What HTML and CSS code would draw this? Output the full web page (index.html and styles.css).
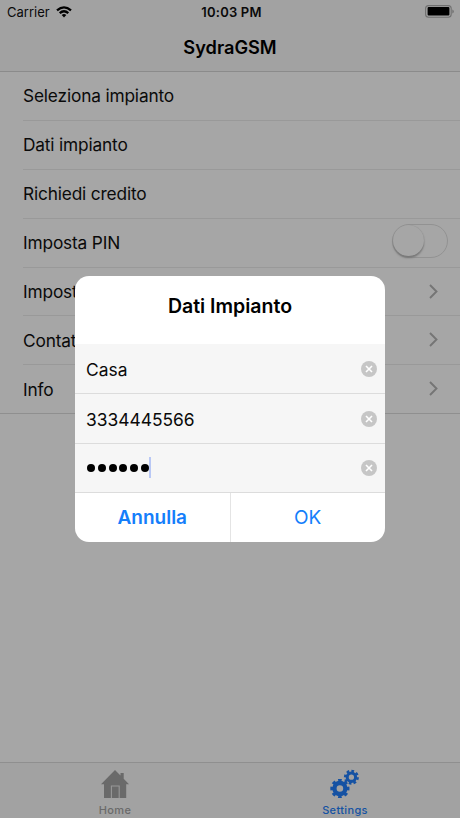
FILE: index.html
```html
<!DOCTYPE html>
<html lang="it">
<head>
<meta charset="utf-8">
<title>SydraGSM</title>
<link rel="stylesheet" href="styles.css">
</head>
<body>
<div class="screen">
  <header class="top">
    <div class="status">
      <div class="carrier"><span>Carrier</span>
        <svg width="16" height="12" viewBox="0 0 16 12" fill="none" stroke="#000" stroke-width="2.3"><path d="M1 4.4Q8-1.7 15 4.4"/><path d="M3.7 7.2Q8 3.3 12.3 7.2"/><path d="M5.7 9Q8 7 10.3 9L8 11.4Z" fill="#000" stroke="none"/></svg>
      </div>
      <div class="time">10:03 PM</div>
      <svg class="battery" width="29" height="13" viewBox="0 0 29 13"><rect x=".6" y=".6" width="25.6" height="11.6" rx="3" fill="none" stroke="#707070" stroke-width="1.1"/><rect x="2.6" y="2" width="21.8" height="8.6" rx="1" /><path d="M27.3 4.4q1.5.6 1.5 2t-1.5 2z" fill="#707070"/></svg>
    </div>
    <h1 class="title">SydraGSM</h1>
  </header>
  <main class="list">
    <div class="row"><span>Seleziona impianto</span></div>
    <div class="row"><span>Dati impianto</span></div>
    <div class="row"><span>Richiedi credito</span></div>
    <div class="row row-switch"><span>Imposta PIN</span><i class="switch"><i class="knob"></i></i></div>
    <div class="row"><span>Impostazioni</span><svg class="chevron" width="9" height="15" viewBox="0 0 9 15"><path d="M1 1l6.5 6.5L1 14"/></svg></div>
    <div class="row"><span>Contatti</span><svg class="chevron" width="9" height="15" viewBox="0 0 9 15"><path d="M1 1l6.5 6.5L1 14"/></svg></div>
    <div class="row row-last"><span>Info</span><svg class="chevron" width="9" height="15" viewBox="0 0 9 15"><path d="M1 1l6.5 6.5L1 14"/></svg></div>
  </main>
  <nav class="tabs">
    <div class="tab">
      <svg width="30" height="30" viewBox="0 0 30 30"><path fill="#6a6a6a" d="M15 1L20.5 6.5V4h3.2v5.7L29 15.2H26.2V29H4V15.2H1Z"/><path d="M11.4 29V17h7.8V29" fill="none" stroke="#989898" stroke-width="1.1"/></svg>
      <span>Home</span>
    </div>
    <div class="tab active">
      <svg width="30" height="30" viewBox="0 0 30 30" fill="none" stroke="#1552a3"><circle cx="9.9" cy="19.5" r="5.5" stroke-width="4.4"/><circle cx="9.9" cy="19.5" r="8.1" stroke-width="3" pathLength="16" stroke-dasharray="1.1 .9" stroke-dashoffset=".55"/><circle cx="21.4" cy="8.2" r="4.2" stroke-width="3.1"/><circle cx="21.4" cy="8.2" r="6.3" stroke-width="2.4" pathLength="16" stroke-dasharray="1.1 .9" stroke-dashoffset="0"/></svg>
      <span>Settings</span>
    </div>
  </nav>
  <div class="dialog">
    <h2 class="dialog-title">Dati Impianto</h2>
    <div class="field"><span>Casa</span><svg class="clear" width="16" height="16" viewBox="0 0 16 16"><circle cx="8" cy="8" r="8"/><path d="M5 5l6 6M11 5l-6 6"/></svg></div>
    <div class="field"><span class="number">3334445566</span><svg class="clear" width="16" height="16" viewBox="0 0 16 16"><circle cx="8" cy="8" r="8"/><path d="M5 5l6 6M11 5l-6 6"/></svg></div>
    <div class="field"><div class="password"><i></i><i></i><i></i><i></i><i></i><i></i><b class="caret"></b></div><svg class="clear" width="16" height="16" viewBox="0 0 16 16"><circle cx="8" cy="8" r="8"/><path d="M5 5l6 6M11 5l-6 6"/></svg></div>
    <div class="actions"><div class="cancel"><span>Annulla</span></div><div class="ok"><span>OK</span></div></div>
  </div>
</div>
</body>
</html>
```

FILE: styles.css
```css
* { box-sizing: border-box; }
body { margin: 0; font-family: Inter, "Liberation Sans", sans-serif; color: #0a0a0a; }
.screen { position: relative; width: 460px; height: 818px; background: #a6a6a6; display: flex; flex-direction: column; overflow: hidden; }
.top { height: 72px; background: #a2a2a2; border-bottom: 1px solid #8b8b8b; }
.status { height: 24px; padding: 0 6px 0 7px; display: grid; grid-template-columns: 1fr auto 1fr; align-items: center; font-size: 13px; }
.carrier { display: flex; align-items: center; gap: 6px; letter-spacing: 0; }
.time { font-weight: 600; letter-spacing: .2px; padding-left: 2px; }
.battery { justify-self: end; margin-top: -1px; }
.title { margin: 0; height: 46px; line-height: 47px; text-align: center; font-size: 18.2px; font-weight: 600; color: #000; }
.list { flex: 1; }
.row { height: 48.9px; margin-left: 23px; padding-right: 22px; border-bottom: 1px solid #999; display: flex; align-items: center; justify-content: space-between; font-size: 17.3px; letter-spacing: -.16px; }
.row-switch { padding-right: 12px; }
.row-last { margin-left: 0; padding-left: 23px; border-color: #8f8f8f; }
.chevron { fill: none; stroke: #757575; stroke-width: 1.9; margin-top: -1px; }
.switch { display: block; width: 56px; height: 34px; margin-top: -3px; border: 1.5px solid #929292; border-radius: 17px; }
.knob { display: block; width: 31px; height: 31px; border-radius: 50%; background: #a6a6a6; box-shadow: 0 2px 2px #777, 0 0 1px #888; }
.tabs { height: 56px; display: flex; background: #a2a2a2; border-top: 1px solid #8f8f8f; }
.tab { flex: 1; padding-top: 6px; display: flex; flex-direction: column; align-items: center; font-size: 11px; font-weight: 500; letter-spacing: .35px; color: #6a6a6a; line-height: 14px; }
.tab svg { margin-bottom: 4px; flex: none; }
.active { color: #1552a3; }
.dialog { position: absolute; left: 75px; top: 276px; width: 310px; height: 266px; border-radius: 14px; background: #fff; overflow: hidden; }
.dialog-title { margin: 0; height: 68px; padding-top: 18px; line-height: 25px; text-align: center; font-size: 19.5px; font-weight: 600; color: #000; }
.field { height: 49.4px; padding: 1px 8px 0 11px; background: #f6f6f6; border-bottom: 1px solid #dcdcdc; display: flex; align-items: center; justify-content: space-between; font-size: 17.4px; }
.field:nth-of-type(1) { height: 50.4px; }
.clear { fill: #c6c6c6; stroke: #fff; stroke-width: 1.6; }
.clear circle { stroke: none; }
.password { display: flex; align-items: center; gap: 2.8px; padding-left: 1px; }
.password i { width: 8px; height: 8px; border-radius: 50%; background: #000; }
.caret { width: 2px; height: 21px; margin: -2px 0 0 -2.5px; background: #b9c8f5; }
.actions { height: 48.8px; display: flex; font-size: 19px; color: #147efb; }
.actions div { flex: 1; display: flex; align-items: center; justify-content: center; }
.cancel { font-weight: 600; border-right: 1px solid #e4e4e4; }
```
